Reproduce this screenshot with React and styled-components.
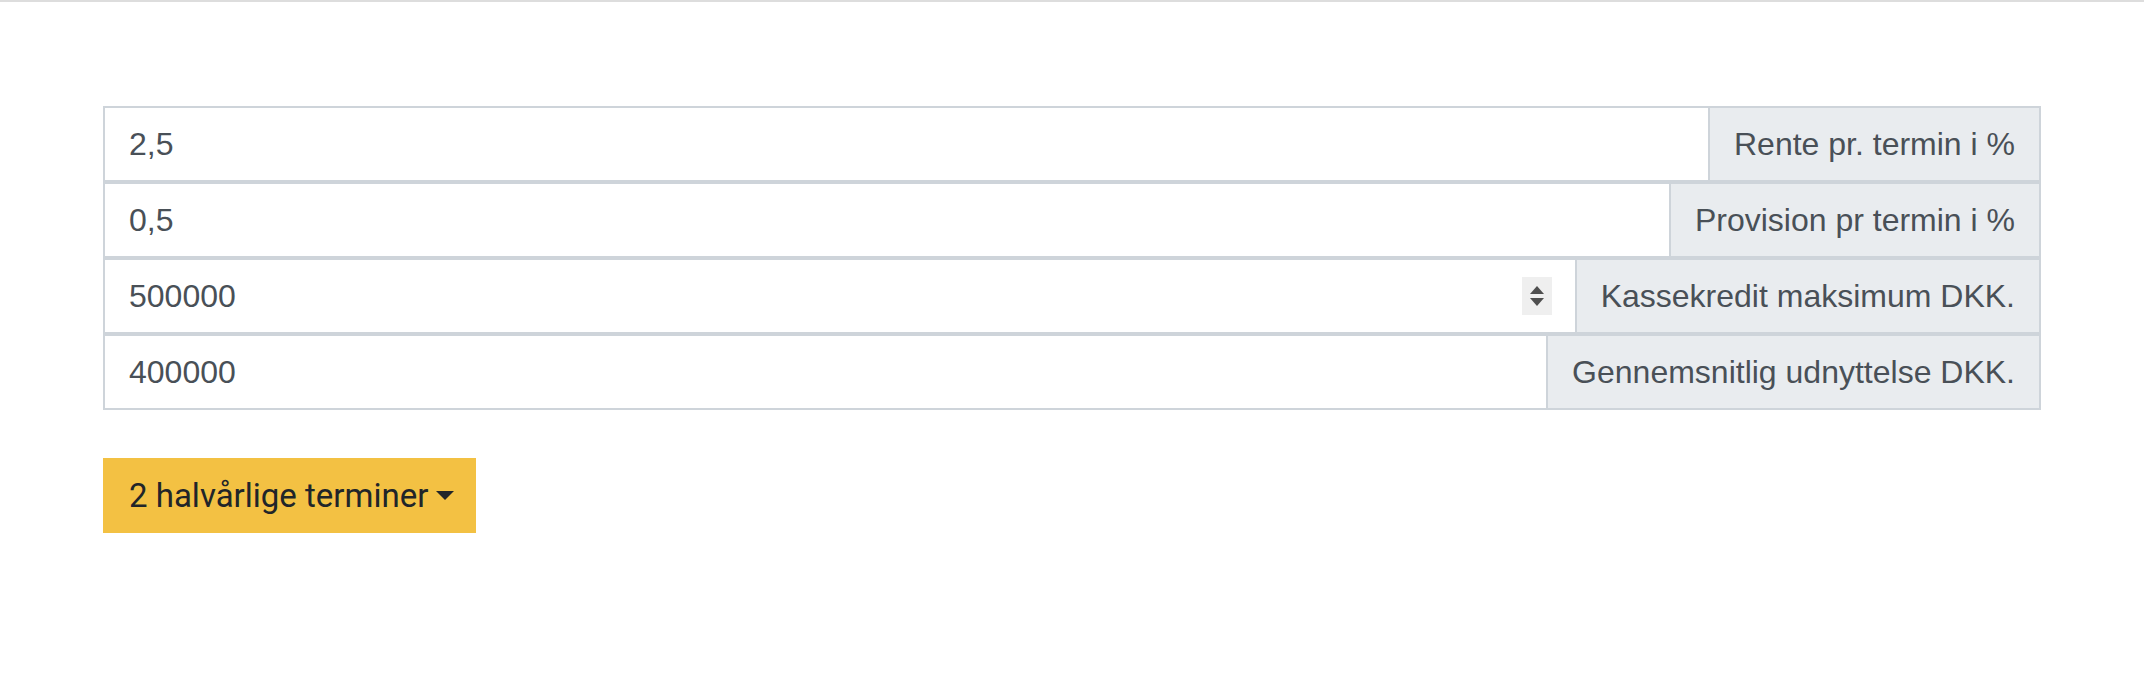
import React from "react";
import styled, { createGlobalStyle } from "styled-components";

const GlobalStyle = createGlobalStyle`
  html, body { margin: 0; padding: 0; background: #ffffff; }
  body { font-family: "Liberation Sans", Arial, sans-serif; }
  * { box-sizing: border-box; }
`;

const TopRule = styled.div`
  height: 2px;
  background: #dddddd;
`;

const Main = styled.main`
  padding: 104px 103px 0 103px;
`;

const Form = styled.form`
  display: flex;
  flex-direction: column;
  align-items: stretch;
`;

const Row = styled.div`
  display: flex;
  height: 76px;
`;

const Field = styled.div`
  flex: 1;
  min-width: 0;
  display: flex;
  align-items: center;
  border: 2px solid #ced4da;
  background: #ffffff;
  padding: 0 ${(p) => (p.$spin ? "23px" : "24px")} 0 24px;
`;

const Input = styled.input`
  flex: 1;
  min-width: 0;
  border: none;
  outline: none;
  background: transparent;
  padding: 0;
  font-family: "Liberation Sans", Arial, sans-serif;
  font-size: 32px;
  color: #495057;
`;

const Spinner = styled.span`
  width: 30px;
  height: 38px;
  background: #efefef;
  display: flex;
  flex-direction: column;
  align-items: center;
  justify-content: center;
  gap: 4px;
  flex: none;
`;

const Label = styled.span`
  display: flex;
  align-items: center;
  padding: 0 24px;
  background: #e9ecef;
  border: 2px solid #ced4da;
  border-left: none;
  white-space: nowrap;
  font-size: 32px;
  color: #495057;
`;

const Button = styled.button`
  align-self: flex-start;
  margin-top: 48px;
  height: 75px;
  padding: 0 22px 0 26px;
  display: inline-flex;
  align-items: center;
  border: none;
  border-radius: 0;
  background: #f3c143;
  color: #212529;
  font-family: Roboto, "Liberation Sans", sans-serif;
  font-size: 33px;
  cursor: pointer;
`;

const Caret = styled.span`
  margin-left: 8px;
  width: 0;
  height: 0;
  border-top: 9px solid #212529;
  border-left: 9.5px solid transparent;
  border-right: 9.5px solid transparent;
`;

const rows = [
  { value: "2,5", label: "Rente pr. termin i %" },
  { value: "0,5", label: "Provision pr termin i %" },
  { value: "500000", label: "Kassekredit maksimum DKK.", spin: true },
  { value: "400000", label: "Gennemsnitlig udnyttelse DKK." },
];

function Arrow({ up }) {
  return (
    <svg width="14" height="8" viewBox="0 0 14 8">
      <path d={up ? "M7 0 L14 8 L0 8 Z" : "M0 0 L14 0 L7 8 Z"} fill="#4f4f4f" />
    </svg>
  );
}

export default function App() {
  return (
    <>
      <GlobalStyle />
      <TopRule />
      <Main>
        <Form onSubmit={(e) => e.preventDefault()}>
          {rows.map((r) => (
            <Row key={r.label}>
              <Field $spin={r.spin}>
                <Input defaultValue={r.value} />
                {r.spin && (
                  <Spinner>
                    <Arrow up />
                    <Arrow />
                  </Spinner>
                )}
              </Field>
              <Label>{r.label}</Label>
            </Row>
          ))}
          <Button type="button">
            2 halvårlige terminer
            <Caret />
          </Button>
        </Form>
      </Main>
    </>
  );
}
